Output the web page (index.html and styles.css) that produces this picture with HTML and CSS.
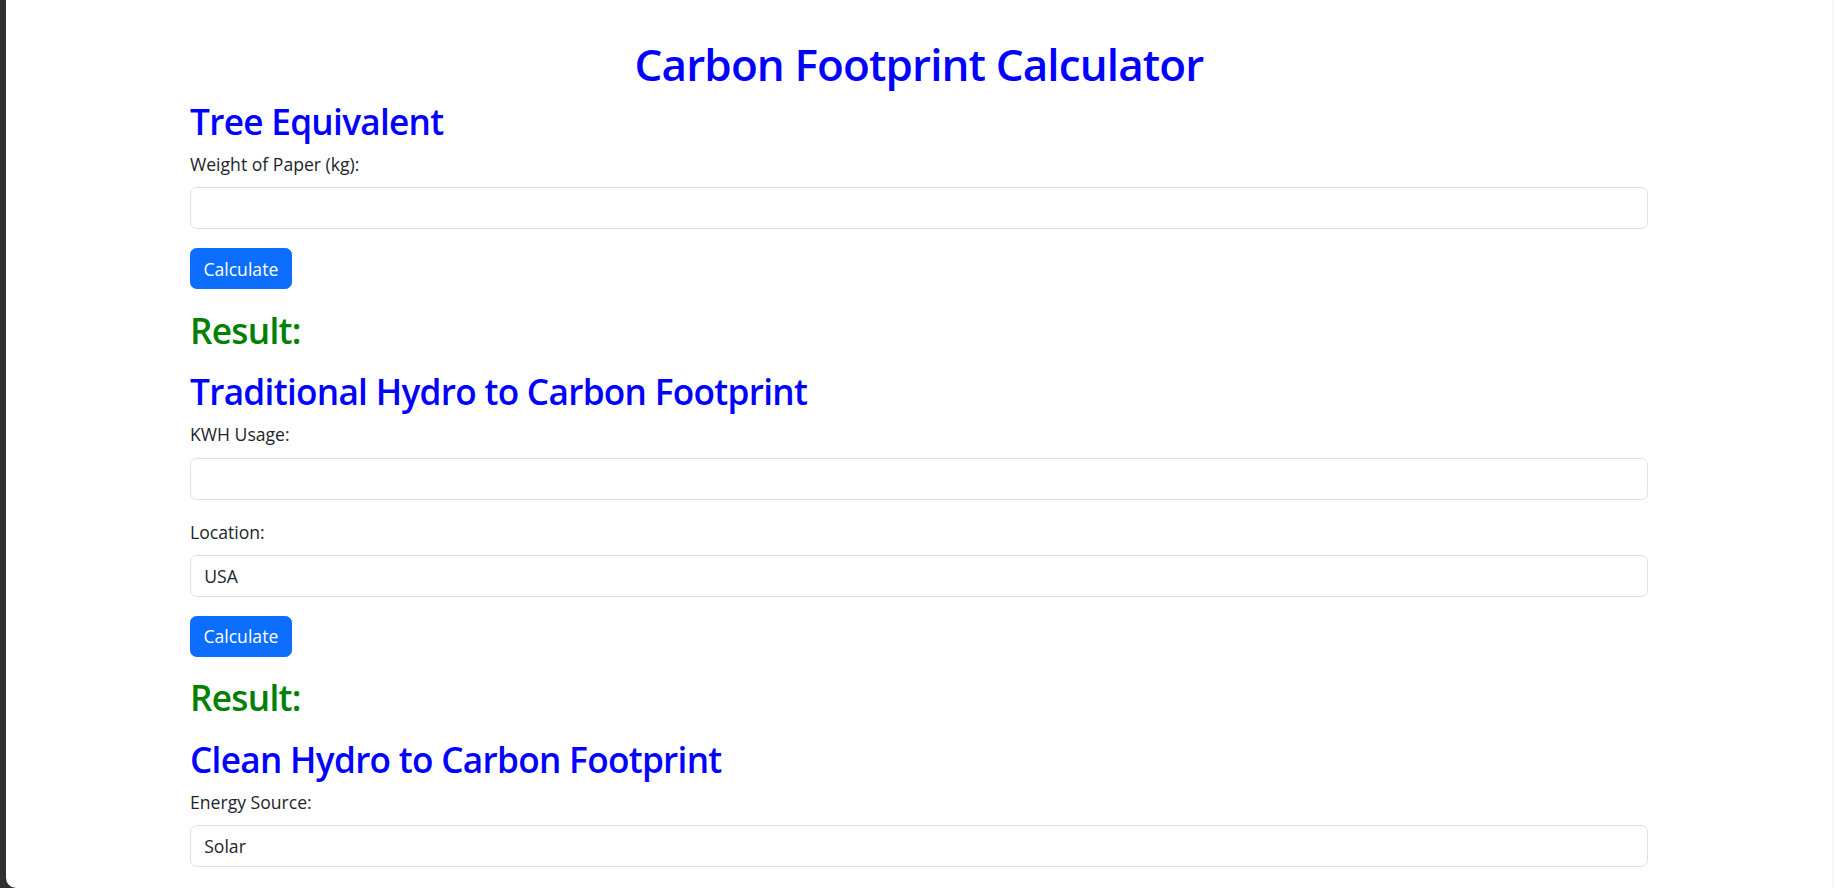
FILE: index.html
```html
<!DOCTYPE html>
<html lang="en">
<head>
<meta charset="utf-8">
<title>Carbon Footprint Calculator</title>
<link rel="stylesheet" href="styles.css">
</head>
<body>
<div class="frame">
  <main class="page">
    <div class="container">
      <h1 class="title">Carbon Footprint Calculator</h1>

      <section class="calc">
        <h2 class="heading">Tree Equivalent</h2>
        <div class="group">
          <label class="label" for="paper">Weight of Paper (kg):</label>
          <input class="field" id="paper" type="text">
        </div>
        <button class="btn" type="button">Calculate</button>
        <h2 class="result">Result:</h2>
      </section>

      <section class="calc">
        <h2 class="heading">Traditional Hydro to Carbon Footprint</h2>
        <div class="group">
          <label class="label" for="kwh">KWH Usage:</label>
          <input class="field" id="kwh" type="text">
        </div>
        <div class="group">
          <label class="label" for="loc">Location:</label>
          <div class="field select" id="loc">USA</div>
        </div>
        <button class="btn" type="button">Calculate</button>
        <h2 class="result">Result:</h2>
      </section>

      <section class="calc">
        <h2 class="heading">Clean Hydro to Carbon Footprint</h2>
        <div class="group">
          <label class="label" for="src">Energy Source:</label>
          <div class="field select" id="src">Solar</div>
        </div>
      </section>
    </div>
  </main>
  <div class="scrollbar"></div>
</div>
</body>
</html>
```

FILE: styles.css
```css
* {
  box-sizing: border-box;
}

html, body {
  margin: 0;
  padding: 0;
  height: 888px;
  overflow: hidden;
}

body {
  background: #303030;
  font-family: "Open Sans", "Noto Sans", sans-serif;
  color: #212529;
  font-size: 17.6px;
}

.frame {
  margin-left: 6px;
  height: 888px;
  background: #ffffff;
  border-bottom-left-radius: 10px;
  display: flex;
  overflow: hidden;
}

.page {
  flex: 1;
  min-width: 0;
}

.scrollbar {
  width: 2px;
  background: #f6f6f6;
}

.container {
  width: 1458px;
  margin: 0 auto;
  padding-top: 38px;
}

.title {
  margin: 0 0 9px;
  font-size: 44px;
  line-height: 52.8px;
  font-weight: 600;
  letter-spacing: -0.02em;
  color: #0000ff;
  text-align: center;
}

.heading,
.result {
  margin: 0;
  font-size: 35.2px;
  line-height: 42.24px;
  font-weight: 600;
  letter-spacing: -0.02em;
}

.heading {
  color: #0000ff;
  margin-bottom: 9px;
}

.result {
  color: #008000;
  margin-bottom: 19.44px;
}

.group {
  margin-bottom: 19px;
}

.label {
  display: block;
  line-height: 26.4px;
  margin-bottom: 9.8px;
  font-size: 17.6px;
}

.field {
  display: block;
  width: 100%;
  height: 42px;
  margin: 0;
  padding: 0 13.2px;
  border: 1.1px solid #dee2e6;
  border-radius: 6.6px;
  background: #ffffff;
  font-family: inherit;
  font-size: 17.6px;
  color: #212529;
  outline: none;
}

.select {
  display: flex;
  align-items: center;
}

.btn {
  display: block;
  height: 41px;
  margin: 0 0 19.3px;
  padding: 0 12.4px;
  border: 1.1px solid #0d6efd;
  border-radius: 6.6px;
  background: #0d6efd;
  color: #ffffff;
  font-family: inherit;
  font-size: 17.6px;
  cursor: pointer;
}
```
